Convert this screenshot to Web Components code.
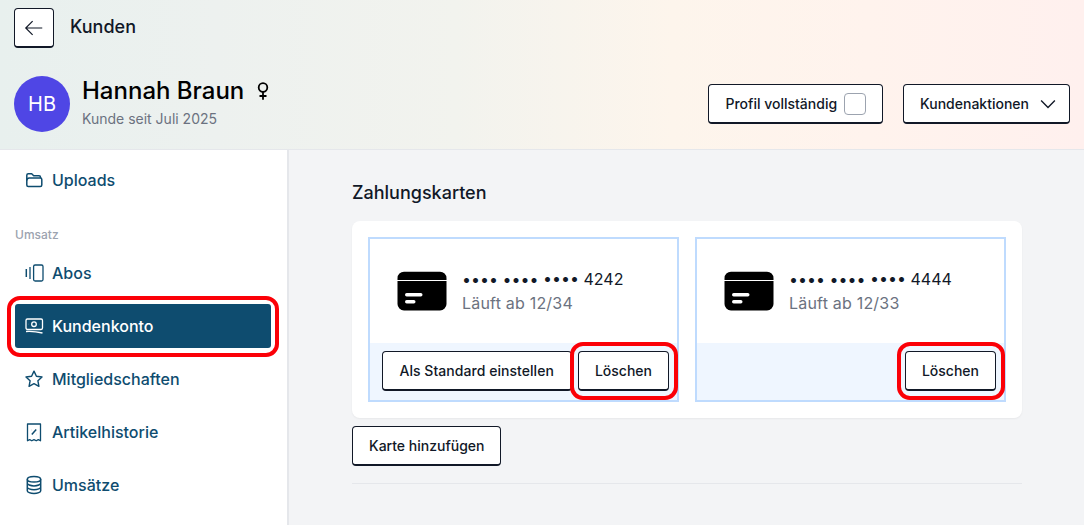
<!DOCTYPE html>
<html lang="de"><head><meta charset="utf-8"><title>Kunden</title>
<style>
html,body{margin:0;height:100%;overflow:hidden}
body{font-family:Inter,"Liberation Sans",sans-serif;background:#f3f4f6}
</style></head><body>
<customer-page></customer-page>
<script>
const ic={
back:'<svg width="22" height="22" viewBox="0 0 24 24" fill="none" stroke="#111827" stroke-width="1.3"><path d="M10.5 19.500 3 12l7.500-7.500M3 12h18"/></svg>',
chev:'<svg width="22" height="22" viewBox="0 0 24 24" fill="none" stroke="#111827" stroke-width="1.5"><path d="m19.500 8.250-7.500 7.500-7.500-7.500"/></svg>',
folder:'<svg width="20" height="20" viewBox="0 0 20 20" fill="none" stroke="currentColor" stroke-width="1.500" stroke-linejoin="round"><path d="M2.800 15V5.200a1.500 1.500 0 0 1 1.500-1.500h3.400l2 2h5.300a1.500 1.500 0 0 1 1.500 1.500V8"/><path d="M2.800 15a1.500 1.500 0 0 0 1.500 1.500h12a1.500 1.500 0 0 0 1.500-1.500V9.500A1.500 1.500 0 0 0 16.300 8H5.300a2.500 2.500 0 0 0-2.500 2.500"/></svg>',
abos:'<svg width="20" height="20" viewBox="0 0 20 20" fill="none" stroke="currentColor" stroke-width="1.300"><rect x="9.600" y="2" width="9.400" height="16" rx="1.500"/><path d="M6 4v12" stroke-width="1.300"/><path d="M2.300 6v8" stroke-width="1.500"/></svg>',
money:'<svg width="20" height="20" viewBox="0 0 20 20" fill="none" stroke="currentColor" stroke-width="1.300"><rect x="2" y="3" width="16.500" height="10.500" rx="1.400"/><circle cx="10" cy="8.200" r="2.300"/><path d="M4.700 8.200h.1M15.300 8.200h.1" stroke-width="1.600"/><path d="M2 15.500c5.500-.3 11 .2 16.500 1.500"/></svg>',
star:'<svg width="20" height="20" viewBox="0 0 24 24" fill="none" stroke="currentColor" stroke-width="1.700" stroke-linejoin="round"><path d="M12 2.600l2.900 6.100 6.700.9-4.900 4.600 1.200 6.600-5.900-3.200-5.900 3.200 1.200-6.600-4.900-4.600 6.700-.9z"/></svg>',
receipt:'<svg width="20" height="20" viewBox="0 0 20 20" fill="none" stroke="currentColor" stroke-width="1.300" stroke-linejoin="round"><path d="M3.500 2h13v16.800l-2.200-1.200-2.100 1.200-2.200-1.200-2.200 1.200-2.100-1.200-2.200 1.200z"/><path d="M7.800 12.500 12.200 7.500M7.800 8h.1M12.200 12h.1" stroke-width="1.500"/></svg>',
db:'<svg width="20" height="20" viewBox="0 0 20 20" fill="none" stroke="currentColor" stroke-width="1.500"><ellipse cx="10" cy="4.300" rx="6.700" ry="2.800"/><path d="M3.300 4.300v11.400c0 1.500 3 2.800 6.700 2.800s6.700-1.300 6.700-2.800V4.300M3.300 8.100c0 1.500 3 2.800 6.700 2.800s6.700-1.300 6.700-2.800M3.300 11.900c0 1.500 3 2.800 6.700 2.800s6.700-1.300 6.700-2.800"/></svg>',
card:'<svg width="50" height="40" viewBox="0 0 50 40"><path d="M7 .7h36a6.500 6.500 0 0 1 6.500 6.500V9H.5V7.200A6.500 6.500 0 0 1 7 .7z" fill="#000"/><path d="M.5 10h49V33a6.500 6.500 0 0 1-6.500 6.500H7A6.500 6.500 0 0 1 .5 33z" fill="#000"/><rect x="8" y="22" width="17.500" height="3.500" rx="1.700" fill="#fff"/><rect x="8" y="29" width="10.500" height="3.500" rx="1.700" fill="#fff"/></svg>'
};
function def(name,html,setup){
  const t=document.createElement('template');t.innerHTML=html;
  customElements.define(name,class extends HTMLElement{
    connectedCallback(){ if(this.shadowRoot)return; const r=this.attachShadow({mode:'open'}); r.appendChild(t.content.cloneNode(true)); if(setup)setup(r,this);}
  });
}
def('ui-button',`<style>
:host{display:inline-flex}
.b{box-sizing:border-box;height:40px;display:flex;align-items:center;gap:8px;padding:0 16px;background:#fff;border:1px solid #111827;border-bottom-width:2px;border-radius:4px;font-size:14px;font-weight:500;color:#111827;white-space:nowrap}
</style><div class="b"><slot></slot></div>`);
def('nav-item',`<style>
:host{display:flex;align-items:center;gap:8px;height:44px;padding:0 9px;border-radius:3px;color:#0e4c6f;font-size:16px;font-weight:500}
:host([active]){background:#0e4c6f;color:#fff}
.i{display:flex;width:20px;height:20px;flex:none}
</style><span class="i"></span><slot></slot>`,(r,h)=>{r.querySelector('.i').innerHTML=ic[h.getAttribute('icon')]});
def('highlight-box',`<style>
:host{position:absolute;z-index:10;box-sizing:border-box;border:4px solid #fb0007;border-radius:13px;pointer-events:none;left:var(--x);top:var(--y);width:var(--w);height:var(--h)}
</style>`,(r,h)=>{for(const k of ['x','y','w','h'])h.style.setProperty('--'+k,h.getAttribute(k)+'px')});
def('page-header',`<style>
:host{display:block;box-sizing:border-box;height:150px;padding:8px 14px 0;border-bottom:1px solid #e5e7eb;background:linear-gradient(90deg,#e8f0ee 0%,#edf1ef 20%,#f2f3ee 42%,#fdf5ec 62%,#fff3ed 80%,#fff0ee 100%)}
.top{display:flex;align-items:center;gap:16px;height:40px;font-size:18px;line-height:38px;font-weight:500;color:#111827}
.top span{margin-top:-2px}
.back{box-sizing:border-box;width:40px;height:40px;border:1px solid #111827;border-bottom-width:2px;border-radius:4px;background:#fff;display:flex;align-items:center;justify-content:center}
.row{display:flex;align-items:center;margin-top:28px;height:56px}
.av{width:56px;height:56px;border-radius:50%;background:#4f46e5;color:#fff;display:flex;align-items:center;justify-content:center;font-size:20px;font-weight:400;flex:none}
.who{margin-left:12px;flex:1;margin-top:-3px}
.name{display:flex;align-items:center;font-size:24px;line-height:30px;font-weight:500;color:#000}
.name svg{margin-left:11px}
.sub{font-size:14px;line-height:20px;color:#6b7280;margin-top:3px}
.acts{display:flex;gap:20px}
.cb{width:22px;height:22px;box-sizing:border-box;border:1px solid #9ca3af;border-radius:4px;background:#fff;margin-left:-1px}
.chev{display:flex;margin-right:-6px}
</style>
<div class="top"><div class="back">${ic.back}</div><span>Kunden</span></div>
<div class="row"><div class="av">HB</div>
<div class="who"><div class="name">Hannah Braun<svg width="16" height="20" viewBox="0 0 16 20" fill="none" stroke="#000" stroke-width="1.800"><circle cx="8" cy="6.500" r="4.300"/><path d="M8 10.800v8M4.500 15h7"/></svg></div><div class="sub">Kunde seit Juli 2025</div></div>
<div class="acts"><ui-button>Profil vollständig<span class="cb"></span></ui-button><ui-button>Kundenaktionen<span class="chev">${ic.chev}</span></ui-button></div></div>`);
def('side-nav',`<style>
:host{display:flex;flex-direction:column;box-sizing:border-box;width:289px;flex:none;background:#fff;border-right:2px solid #e5e7eb;padding:8px 16px 0 15px;gap:9px}
.l{font-size:12px;line-height:16px;font-weight:500;color:#9ca3af;margin:16px 0 -1px;height:16px}
</style>
<nav-item icon="folder">Uploads</nav-item>
<div class="l">Umsatz</div>
<nav-item icon="abos">Abos</nav-item>
<nav-item icon="money" active>Kundenkonto</nav-item>
<nav-item icon="star">Mitgliedschaften</nav-item>
<nav-item icon="receipt">Artikelhistorie</nav-item>
<nav-item icon="db">Umsätze</nav-item>`);
def('pay-card',`<style>
:host{display:flex;flex-direction:column;flex:1 1 0;min-width:0;box-sizing:border-box;height:165px;border:2px solid #bfdbfe;background:#fff}
.top{height:104px;display:flex;align-items:center;padding-left:27px;gap:15px;box-sizing:border-box}
.svg{display:flex}
.num{font-size:16px;line-height:24px;color:#111827;white-space:nowrap}
.exp{font-size:16px;line-height:24px;color:#6b7280;letter-spacing:.2px}
.foot{flex:1;background:#eff6ff;display:flex;justify-content:flex-end;align-items:flex-start;gap:6px;padding:8px 8px 0 12px}
</style>
<div class="top"><span class="svg">${ic.card}</span><div><div class="num"><slot name="num"></slot></div><div class="exp"><slot name="exp"></slot></div></div></div>
<div class="foot"><slot></slot></div>`);
def('customer-page',`<style>
:host{display:block;position:relative;width:1084px;height:525px;overflow:hidden;background:#f3f4f6}
.body{display:flex;height:375px}
main{flex:1;padding:31px 62px 0 63px}
h2{margin:0;font-size:18px;line-height:24px;font-weight:500;color:#111827;height:40px}
.panel{background:#fff;border-radius:8px;padding:16px;height:197px;box-sizing:border-box;display:flex;gap:16px;box-shadow:0 1px 2px rgba(0,0,0,.05)}
.add{margin-top:8px}
hr{border:0;border-top:1px solid #e5e7eb;margin:17px 0 0}
</style>
<page-header></page-header>
<div class="body"><side-nav></side-nav>
<main><h2>Zahlungskarten</h2>
<div class="panel">
<pay-card><span slot="num">•••• •••• •••• 4242</span><span slot="exp">Läuft ab 12/34</span><ui-button><span style="letter-spacing:.05px;margin-right:1px">Als Standard einstellen</span></ui-button><ui-button>Löschen</ui-button></pay-card>
<pay-card><span slot="num">•••• •••• •••• 4444</span><span slot="exp">Läuft ab 12/33</span><ui-button>Löschen</ui-button></pay-card>
</div>
<div class="add"><ui-button><span style="margin-right:-1px">Karte hinzufügen</span></ui-button></div>
<hr></main></div>
<highlight-box x="7" y="296" w="272" h="61"></highlight-box>
<highlight-box x="570" y="342" w="108" h="58"></highlight-box>
<highlight-box x="897" y="342" w="108" h="58"></highlight-box>`);
</script>
</body></html>
